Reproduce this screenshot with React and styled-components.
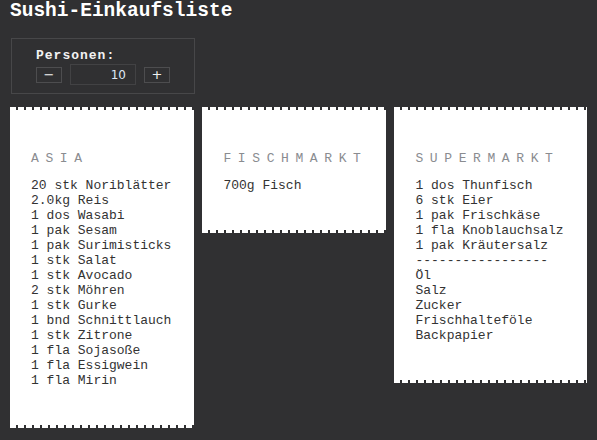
import React, { useState } from "react";
import styled, { createGlobalStyle } from "styled-components";

const Global = createGlobalStyle`
  html, body { margin: 0; padding: 0; background: #303032; }
  body { font-family: "Courier New", "Liberation Mono", monospace; }
`;

const Page = styled.div`
  padding: 0 10px;
  min-height: 440px;
  box-sizing: border-box;
`;

const Title = styled.h1`
  margin: 0 0 16px 0;
  font-family: "Courier New", "Liberation Mono", monospace;
  font-weight: bold;
  font-size: 19.5px;
  line-height: 22px;
  color: #ffffff;
`;

const Panel = styled.div`
  display: inline-flex;
  flex-direction: column;
  margin-left: 1px;
  padding: 8px 24px;
  border: 1px solid #474749;
`;

const Label = styled.div`
  font-weight: bold;
  font-size: 13px;
  letter-spacing: 1px;
  line-height: 17px;
  color: #f2f2f2;
`;

const Row = styled.div`
  display: flex;
  align-items: center;
  gap: 8px;
  height: 21px;
`;

const StepButton = styled.button`
  width: 26px;
  height: 16px;
  padding: 0;
  background: transparent;
  border: 1px solid #4d4d4f;
  color: #f0f0f0;
  font-family: "DejaVu Sans", Verdana, sans-serif;
  font-size: 13px;
  line-height: 14px;
  cursor: pointer;
`;

const NumberInput = styled.input`
  width: 66px;
  height: 21px;
  box-sizing: border-box;
  padding: 0 9px 0 0;
  background: transparent;
  border: 1px solid #424244;
  color: #dfe8f5;
  font-family: "DejaVu Sans", Verdana, sans-serif;
  font-size: 12px;
  text-align: right;
  outline: none;
`;

const Lists = styled.div`
  display: flex;
  align-items: flex-start;
  gap: 8px;
  margin-top: 13px;
`;

const Card = styled.div`
  padding: 44px 23px 40px 21px;
  background:
    repeating-linear-gradient(90deg, #fff 0 6px, transparent 6px 8px) left top / 100% 3px no-repeat,
    repeating-linear-gradient(90deg, #fff 0 6px, transparent 6px 8px) left bottom / 100% 3px no-repeat,
    linear-gradient(#fff, #fff) left 3px / 100% calc(100% - 6px) no-repeat;
  font-family: "Courier New", "Liberation Mono", monospace;
  font-size: 13px;
  line-height: 15px;
`;

const Heading = styled.div`
  color: #8a8c90;
  letter-spacing: 6.6px;
  margin-right: -6.6px;
  margin-bottom: 12px;
  text-transform: uppercase;
  white-space: pre;
`;

const Items = styled.ul`
  list-style: none;
  margin: 0;
  padding: 0;
  min-width: 140px;
  color: #333333;
`;

const Item = styled.li`
  white-space: pre;
`;

const lists = [
  {
    name: "Asia",
    items: [
      "20 stk Noriblätter",
      "2.0kg Reis",
      "1 dos Wasabi",
      "1 pak Sesam",
      "1 pak Surimisticks",
      "1 stk Salat",
      "1 stk Avocado",
      "2 stk Möhren",
      "1 stk Gurke",
      "1 bnd Schnittlauch",
      "1 stk Zitrone",
      "1 fla Sojasoße",
      "1 fla Essigwein",
      "1 fla Mirin",
    ],
  },
  { name: "Fischmarkt", items: ["700g Fisch"] },
  {
    name: "Supermarkt",
    items: [
      "1 dos Thunfisch",
      "6 stk Eier",
      "1 pak Frischkäse",
      "1 fla Knoblauchsalz",
      "1 pak Kräutersalz",
      "-----------------",
      "Öl",
      "Salz",
      "Zucker",
      "Frischhalteföle",
      "Backpapier",
    ],
  },
];

export default function App() {
  const [persons, setPersons] = useState(10);
  return (
    <Page>
      <Global />
      <Title>Sushi-Einkaufsliste</Title>
      <Panel>
        <Label>Personen:</Label>
        <Row>
          <StepButton onClick={() => setPersons((p) => Math.max(1, p - 1))}>−</StepButton>
          <NumberInput
            value={persons}
            onChange={(e) => setPersons(Number(e.target.value) || 0)}
          />
          <StepButton onClick={() => setPersons((p) => p + 1)}>+</StepButton>
        </Row>
      </Panel>
      <Lists>
        {lists.map((l) => (
          <Card key={l.name}>
            <Heading>{l.name}</Heading>
            <Items>
              {l.items.map((it, i) => (
                <Item key={i}>{it}</Item>
              ))}
            </Items>
          </Card>
        ))}
      </Lists>
    </Page>
  );
}
